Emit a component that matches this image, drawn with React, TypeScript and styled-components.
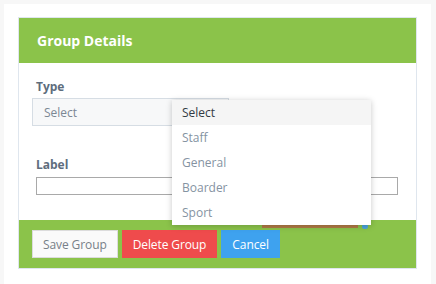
import styled, { createGlobalStyle } from 'styled-components';

const Global = createGlobalStyle`
  html, body {
    margin: 0;
    padding: 0;
    background: #f7f7f7;
    font-family: 'Open Sans', 'Liberation Sans', sans-serif;
  }
  * {
    box-sizing: border-box;
  }
`;

const Page = styled.div`
  width: 436px;
  height: 284px;
  padding: 4px 5px 0 4px;
`;

const Card = styled.div`
  background: #ffffff;
  height: 280px;
  padding: 13px 14px 0 14px;
`;

const Panel = styled.div`
  position: relative;
  width: 399px;
  border: 1px solid #dfe6ee;
`;

const Header = styled.div`
  background: #8bc34a;
  height: 45px;
  padding: 0 18px;
  display: flex;
  align-items: center;
  color: #ffffff;
  font-size: 14px;
  font-weight: 700;
`;

const Body = styled.div`
  background: #ffffff;
  height: 157px;
  padding: 16px 17px 0 13px;
`;

const Field = styled.div<{ $gap: number; $top?: number }>`
  display: flex;
  flex-direction: column;
  gap: ${(p) => p.$gap}px;
  margin-top: ${(p) => p.$top ?? 0}px;
`;

const Label = styled.div<{ $indent: number }>`
  padding-left: ${(p) => p.$indent}px;
  font-size: 12px;
  font-weight: 700;
  color: #5e6d7d;
  line-height: 16px;
`;

const SelectBox = styled.div`
  width: 197px;
  height: 28px;
  background: #f7f8f9;
  border: 1px solid #d6dde4;
  padding-left: 11px;
  display: flex;
  align-items: center;
  font-size: 12px;
  color: #7b8794;
`;

const TextInput = styled.div`
  margin-left: 4px;
  width: 362px;
  height: 18px;
  border: 1px solid #a9a9a9;
  background: #ffffff;
`;

const Footer = styled.div`
  background: #8bc34a;
  height: 48px;
  padding: 10px 13px;
  display: flex;
  gap: 4px;
`;

const Button = styled.div<{ $bg: string; $fg: string; $border: string }>`
  height: 28px;
  padding: 0 10px;
  display: flex;
  align-items: center;
  background: ${(p) => p.$bg};
  color: ${(p) => p.$fg};
  border: 1px solid ${(p) => p.$border};
  font-size: 12px;
  letter-spacing: -0.1px;
`;

const Peek = styled.div`
  position: absolute;
  left: 243px;
  top: 207px;
  width: 96px;
  height: 3px;
  background: #b07a45;
`;

const PeekDot = styled.div`
  position: absolute;
  left: 343px;
  top: 206px;
  width: 6px;
  height: 5px;
  border-radius: 3px;
  background: #4aa3df;
`;

const Menu = styled.div`
  position: absolute;
  left: 153px;
  top: 82px;
  width: 199px;
  background: #ffffff;
  box-shadow: 0 1px 6px rgba(0, 0, 0, 0.22);
  z-index: 2;
`;

const Option = styled.div<{ $active?: boolean }>`
  height: 25px;
  padding-left: 10px;
  display: flex;
  align-items: center;
  font-size: 12px;
  background: ${(p) => (p.$active ? '#f5f5f5' : '#ffffff')};
  color: ${(p) => (p.$active ? '#333b44' : '#8593a2')};
`;

const options = ['Select', 'Staff', 'General', 'Boarder', 'Sport'];

export default function App() {
  return (
    <Page>
      <Global />
      <Card>
        <Panel>
          <Header>Group Details</Header>
          <Body>
            <Field $gap={3}>
              <Label $indent={4}>Type</Label>
              <SelectBox>Select</SelectBox>
            </Field>
            <Field $gap={4} $top={31}>
              <Label $indent={4}>Label</Label>
              <TextInput />
            </Field>
          </Body>
          <Footer>
            <Button $bg="#fafafa" $fg="#777f88" $border="#dcdcdc">Save Group</Button>
            <Button $bg="#ef4b4c" $fg="#ffffff" $border="#ef4b4c">Delete Group</Button>
            <Button $bg="#3ea2ef" $fg="#ffffff" $border="#3ea2ef">Cancel</Button>
          </Footer>
          <Peek />
          <PeekDot />
          <Menu>
            {options.map((o, i) => (
              <Option key={o} $active={i === 0}>
                {o}
              </Option>
            ))}
          </Menu>
        </Panel>
      </Card>
    </Page>
  );
}
